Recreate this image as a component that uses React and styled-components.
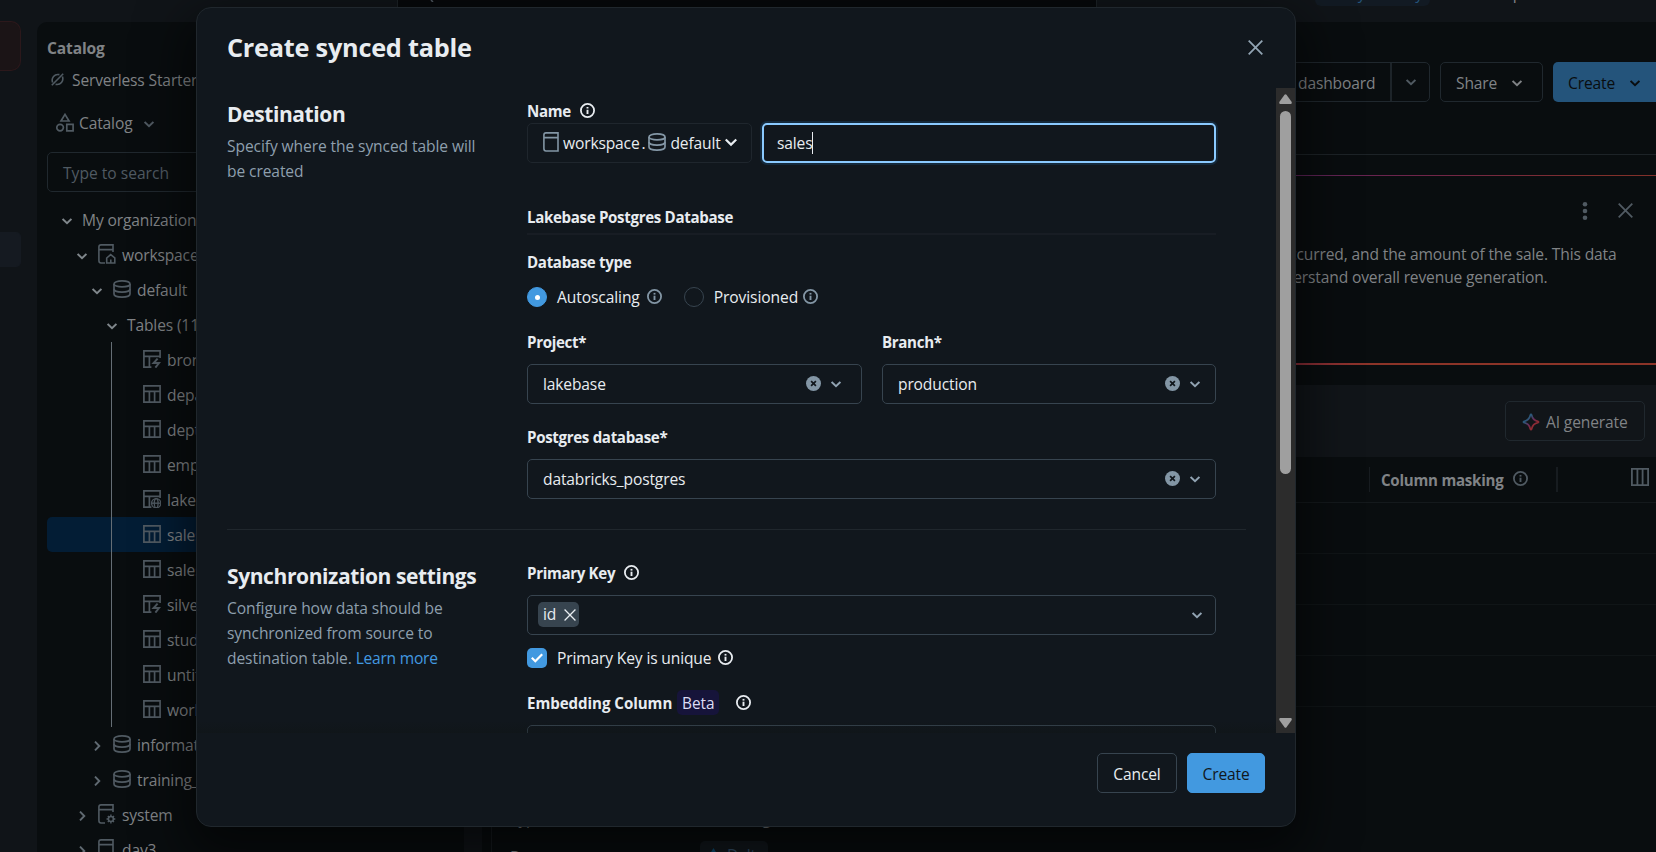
import React from 'react';
import styled, { createGlobalStyle } from 'styled-components';

const GlobalStyle = createGlobalStyle`
  * {
    box-sizing: border-box;
  }

  body {
    margin: 0;
    overflow: hidden;
    background: #101418;
    font-family: "Open Sans", "Noto Sans", sans-serif;
    font-size: 15.6px;
    letter-spacing: -0.15px;
    line-height: 25px;
  }

  svg {
    display: block;
    flex: none;
  }
`;

/* ---------- icons ---------- */

const Chevron = ({ size = 10, rotate, color = 'currentColor', w = 1.9 }) => (
  <svg width={size} height={size} viewBox="0 0 10 10" fill="none" stroke={color} strokeWidth={w}>
    <path d={rotate ? 'M3 0.6 L7.3 5 L3 9.4' : 'M0.6 2.9 L5 7.2 L9.4 2.9'} />
  </svg>
);

const CloseIcon = ({ size = 15, w = 1.8 }) => (
  <svg width={size} height={size} viewBox="0 0 15 15" fill="none" stroke="currentColor" strokeWidth={w}>
    <path d="M0.7 0.7 L14.3 14.3 M14.3 0.7 L0.7 14.3" />
  </svg>
);

const InfoIcon = () => (
  <svg width="15" height="15" viewBox="0 0 15 15" fill="none" stroke="currentColor">
    <circle cx="7.5" cy="7.5" r="6.6" strokeWidth="1.8" />
    <path d="M7.5 6.7 V11" strokeWidth="1.9" />
    <path d="M7.5 3.9 V5.6" strokeWidth="1.9" />
  </svg>
);

const ClearIcon = () => (
  <svg width="15" height="15" viewBox="0 0 15 15">
    <circle cx="7.5" cy="7.5" r="7.5" fill="#8396a5" />
    <path d="M5.1 5.1 L9.9 9.9 M9.9 5.1 L5.1 9.9" stroke="#11171c" strokeWidth="1.7" />
  </svg>
);

const SchemaIcon = () => (
  <svg width="18" height="18" viewBox="0 0 18 18" fill="none" stroke="currentColor" strokeWidth="1.7">
    <ellipse cx="9" cy="3.9" rx="8" ry="3" />
    <path d="M1 4 V14 C1 15.8 4.6 17.1 9 17.1 S17 15.8 17 14 V4" />
    <path d="M1 9 C1 10.8 4.6 12.1 9 12.1 S17 10.8 17 9" />
  </svg>
);

const CatalogIcon = ({ badge }) => (
  <svg width="18" height="20" viewBox="0 0 18 20" fill="none" stroke="currentColor" strokeWidth="1.6">
    {badge ? (
      <path d="M7 19 H3 Q0.9 19 0.9 16.6 V3 Q0.9 0.9 3 0.9 H15 V8 M0.9 5.6 H15" />
    ) : (
      <path d="M0.9 3 Q0.9 0.9 3 0.9 H15 V19 H3 Q0.9 19 0.9 16.6 Z M0.9 5.6 H15" />
    )}
    {badge === 'home' && <path d="M8.7 19 V14 L12.7 10.6 L16.8 14 V19 Z M12.8 19 V15.6" />}
    {badge === 'gear' && (
      <g>
        <circle cx="12.9" cy="15" r="2.5" />
        <path
          d="M12.9 10.6 V12.3 M12.9 17.7 V19.4 M8.5 15 H10.2 M15.6 15 H17.3 M9.8 11.9 L11 13.1 M14.8 16.9 L16 18.1 M16 11.9 L14.8 13.1 M9.8 18.1 L11 16.9"
          strokeWidth="1.4"
        />
      </g>
    )}
  </svg>
);

const TableIcon = ({ badge }) => (
  <svg width="18" height="18" viewBox="0 0 18 18" fill="none" stroke="currentColor" strokeWidth="1.7">
    {!badge && <path d="M0.9 0.9 H17.1 V17.1 H0.9 Z M0.9 6.3 H17.1 M6.4 6.3 V17 M11.6 6.3 V17" />}
    {badge && <path d="M8.4 17.1 H0.9 V0.9 H17.1 V8 M0.9 6.3 H17.1 M6.4 6.3 V17" />}
    {badge === 'bolt' && <path d="M14.6 8.6 L10.6 13 H16 L12.4 17.6" strokeWidth="2" />}
    {badge === 'globe' && (
      <g strokeWidth="1.4">
        <circle cx="13.2" cy="13.2" r="4.6" />
        <path d="M8.6 13.2 H17.8" />
        <ellipse cx="13.2" cy="13.2" rx="1.9" ry="4.6" />
      </g>
    )}
  </svg>
);

const ServerlessIcon = () => (
  <svg width="13" height="13" viewBox="0 0 13 13" fill="none" stroke="currentColor" strokeWidth="1.6">
    <path d="M1.6 9.4 C0 5 3.4 0.6 8.4 1.6 M0.8 12.2 L12.2 0.8 M11.4 3.6 C13 8 9.6 12.4 4.6 11.4" />
  </svg>
);

const ShapesIcon = () => (
  <svg width="18" height="19" viewBox="0 0 18 19" fill="none" stroke="currentColor" strokeWidth="1.7">
    <path d="M9 1.4 L13 8 H5 Z" />
    <circle cx="4.1" cy="14.6" r="3.3" />
    <path d="M10.8 11.4 H17.1 V17.9 H10.8 Z" />
  </svg>
);

const ColumnsIcon = () => (
  <svg width="18" height="18" viewBox="0 0 18 18" fill="none" stroke="currentColor" strokeWidth="1.8">
    <path d="M0.9 0.9 H17.1 V17.1 H0.9 Z M6.4 1 V17 M11.6 1 V17" />
  </svg>
);

const SparkleIcon = () => (
  <svg width="18" height="18" viewBox="0 0 18 18" fill="none">
    <defs>
      <linearGradient id="spark" x1="2" y1="2" x2="15" y2="15" gradientUnits="userSpaceOnUse">
        <stop offset="0.3" stopColor="#2c5779" />
        <stop offset="0.55" stopColor="#6b2a58" />
        <stop offset="0.75" stopColor="#8c2b34" />
      </linearGradient>
    </defs>
    <path
      d="M9 1.4 Q9.5 1.4 9.7 2.2 C10.5 5.8 12.2 7.5 15.8 8.3 Q17.4 9 15.8 9.7 C12.2 10.5 10.5 12.2 9.7 15.8 Q9 17.4 8.3 15.8 C7.5 12.2 5.8 10.5 2.2 9.7 Q0.6 9 2.2 8.3 C5.8 7.5 7.5 5.8 8.3 2.2 Q8.5 1.4 9 1.4 Z"
      stroke="url(#spark)"
      strokeWidth="1.7"
    />
  </svg>
);

/* ---------- page behind the dialog ---------- */

const Page = styled.div`
  position: relative;
  display: grid;
  grid-template-columns: 37px 427px 18px 1fr;
  grid-template-rows: 22px 1fr;
  width: 1656px;
  height: 852px;
  overflow: hidden;
  color: #808386;
`;

const TopBar = styled.div`
  grid-column: 1 / -1;
  display: flex;
  align-items: flex-start;
  height: 22px;
  padding-left: 397px;
  overflow: hidden;
`;

const GlobalSearch = styled.div`
  width: 700px;
  height: 22px;
  margin-right: 218px;
  padding-left: 27px;
  background: #07090b;
  border: 1px solid #1c2226;
  border-width: 0 1px;
  color: #505a62;
`;

const TopPill = styled.div`
  display: flex;
  align-items: flex-end;
  width: 115px;
  height: 6px;
  margin-right: 40px;
  padding: 0 0 6px 10px;
  background: #121a23;
  border-radius: 0 0 10px 10px;
  color: #24547b;
  line-height: 13px;
`;

const TopWorkspace = styled.div`
  display: flex;
  align-items: flex-end;
  height: 6px;
  padding-bottom: 6px;
  line-height: 13px;
`;

const Rail = styled.div`
  display: flex;
  flex-direction: column;
  align-items: flex-start;
  gap: 161px;
  margin-top: -1px;
`;

const RailItem = styled.div`
  width: 21px;
  height: ${p => (p.$alert ? '50px' : '35px')};
  background: ${p => (p.$alert ? '#1b1416' : '#151a21')};
  border: 1px solid ${p => (p.$alert ? '#2c181b' : '#151a21')};
  border-left: 0;
  border-radius: 0 ${p => (p.$alert ? '10px 10px' : '5px 5px')} 0;
`;

const CatalogPanel = styled.div`
  padding: 14px 10px 0;
  overflow: hidden;
  background: #090d0f;
  border-radius: 10px 10px 0 0;
  white-space: nowrap;
`;

const PanelTitle = styled.div`
  height: 25px;
  font-weight: 700;
`;

const PanelLine = styled.div`
  display: flex;
  align-items: center;
  gap: ${p => p.$gap};
  height: 25px;
  margin-top: ${p => p.$top};
  padding-left: ${p => p.$left};

  > svg {
    color: #505a62;
  }

  > svg:nth-child(2) {
    margin-left: 7px;
  }

  > svg:first-child {
    margin-top: -3px;
  }
`;

const SearchField = styled.div`
  height: 40px;
  margin-top: 16px;
  padding-left: 15px;
  border: 1px solid #20282e;
  border-radius: 5px;
  color: #505a62;
  letter-spacing: 0;
  line-height: 40px;
`;

const Tree = styled.div`
  margin-top: 10px;
`;

const TreeRow = styled.div`
  display: flex;
  align-items: center;
  height: 35px;
  padding: 2px 0 0 ${p => 15 + p.$depth * 15}px;
`;

const TreeIcon = styled.span`
  margin: -4px 6px 0 1px;
  color: #505a62;
`;

const TreeChevron = styled.span`
  width: 20px;
  color: ${p => (p.$closed ? '#606a72' : '#80878c')};
`;

/* rows under "Tables" hang off a guide line */
const TableList = styled.div`
  position: relative;

  &::before {
    content: "";
    position: absolute;
    top: 0;
    bottom: 0;
    left: 64px;
    width: 1px;
    background: #656e75;
  }
`;

const TableRow = styled.div`
  display: flex;
  align-items: center;
  gap: 6px;
  height: 35px;
  padding: 2px 0 0 96px;
  border-radius: 5px;
  background: ${p => (p.$selected ? '#031d35' : 'transparent')};

  svg {
    margin-top: -4px;
    color: #505a62;
  }
`;

const Gutter = styled.div`
  background: #101418;
`;

const Main = styled.div`
  display: flex;
  flex-direction: column;
  min-width: 0;
  background: #090d0f;
  white-space: nowrap;
`;

const Actions = styled.div`
  display: flex;
  gap: 10px;
  height: 133px;
  padding: 40px 0 0 718px;
  border-bottom: 1px solid #1d2327;

  > * {
    flex: none;
  }
`;

const GhostButton = styled.div`
  display: flex;
  align-items: center;
  gap: ${p => p.$gap || '8px'};
  width: ${p => p.$width};
  height: 40px;
  padding: 2px 0 0 ${p => p.$left || '15px'};
  border: 1px solid #20282e;
  border-radius: 5px;

  > svg {
    margin-top: -1px;
  }
`;

const SplitArrow = styled.span`
  display: flex;
  align-items: center;
  justify-content: center;
  width: 39px;
  height: 38px;
  margin: -2px 0 0 auto;
  border-left: 2px solid #1d2429;
  color: #505a62;
`;

const CreateMenu = styled.div`
  display: flex;
  align-items: center;
  gap: 15px;
  width: 110px;
  height: 40px;
  padding: 2px 0 0 15px;
  background: #24547b;
  border-radius: 5px;
  color: #090d0f;
`;

const Suggestion = styled.div`
  height: 190px;
  margin-top: 20px;
  padding-top: 1px;
  background:
    linear-gradient(90deg, #5b2358 69%, #70254a 80%, #81302a 96%) top / 100% 1px no-repeat,
    linear-gradient(90deg, #8a2c38 69%, #8c3428 76%) bottom / 100% 2px no-repeat;
`;

const SuggestionTools = styled.div`
  display: flex;
  align-items: center;
  justify-content: flex-end;
  gap: 30px;
  height: 67px;
  padding: 2px 23px 0 0;
  color: #505a62;
`;

const SuggestionText = styled.p`
  margin: 0;
  padding-left: 798px;
  line-height: 23px;

  span {
    display: block;
    margin-left: -15px;
  }
`;

const TableToolbar = styled.div`
  display: flex;
  align-items: center;
  justify-content: flex-end;
  height: 72px;
  margin-top: 20px;
  padding-right: 11px;
  background: #111519;
`;

const TableHead = styled.div`
  display: flex;
  align-items: center;
  height: 46px;
  padding-left: 887px;
  border-bottom: 1px solid #14191c;
  color: #505a62;

  > svg {
    margin-top: -5px;
  }
`;

const HeadCell = styled.div`
  display: flex;
  align-items: center;
  gap: 9px;
  width: 189px;
  height: 25px;
  padding: 2px 0 0 11px;
  border: solid #171c20;
  border-width: 0 2px 0 1px;
  margin-right: 73px;

  b {
    color: #808386;
    font-size: 15.1px;
    letter-spacing: -0.25px;
  }

  svg {
    margin-top: -4px;
  }
`;

const EmptyRow = styled.div`
  flex: none;
  height: 51px;
  border-bottom: 1px solid #101517;
`;

const Details = styled.div`
  display: grid;
  grid-template-columns: 190px auto;
  justify-content: start;
  row-gap: 10px;
  width: 400px;
  margin: 99px 0 0 9px;
  padding-left: 18px;
  border-left: 1px solid #171c20;
`;

const DetailName = styled.div`
  padding-top: ${p => p.$top || 0};
`;

const DetailValue = styled.div`
  display: flex;
  align-items: center;
  gap: 8px;
  width: 68px;
  height: ${p => (p.$pill ? '29px' : '25px')};
  padding: ${p => (p.$pill ? '0 0 0 8px' : '0 0 0 22px')};
  background: ${p => (p.$pill ? '#12181d' : 'transparent')};
  border-radius: 5px;
  color: ${p => (p.$pill ? '#34506a' : '#808386')};
`;

/* ---------- dialog ---------- */

const Overlay = styled.div`
  position: absolute;
  inset: 0;
  padding: 7px 0 0 196px;
`;

const Dialog = styled.div`
  display: flex;
  flex-direction: column;
  width: 1100px;
  height: 820px;
  background: #11171d;
  border: 1px solid #20272d;
  border-radius: 15px;
  box-shadow: 0 20px 50px 10px rgba(0, 0, 0, 0.55);
  color: #e8ecf0;
  overflow: hidden;
  white-space: nowrap;
`;

const DialogHeader = styled.div`
  display: flex;
  align-items: center;
  justify-content: space-between;
  height: 80px;
  padding: 0 32px 2px 30px;
  color: #92a4b3;

  h1 {
    margin: 0;
    color: #e8ecf0;
    font-size: 25.3px;
    font-weight: 700;
    letter-spacing: -0.25px;
  }
`;

const DialogBody = styled.div`
  display: flex;
  height: 645px;
`;

const Sections = styled.div`
  position: relative;
  flex: 1;
  padding: 10px 30px 0;
  overflow: hidden;

  /* fade over the last pixels above the footer */
  &::after {
    content: "";
    position: absolute;
    right: 0;
    bottom: 0;
    left: 0;
    height: 12px;
    background: linear-gradient(transparent, rgba(15, 20, 20, 0.4));
  }
`;

const Section = styled.section`
  display: grid;
  grid-template-columns: 300px 689px;
  height: ${p => p.$height};
  border-bottom: 1px solid #20272d;
`;

const Intro = styled.div`
  color: #8e9fad;
  letter-spacing: -0.1px;

  h2 {
    margin: 0 0 5px;
    padding-top: ${p => p.$top};
    color: #e8ecf0;
    font-size: 21px;
    font-weight: 700;
    letter-spacing: -0.4px;
    line-height: 30px;
  }

  a {
    color: #4299e0;
    letter-spacing: -0.25px;
  }
`;

const Label = styled.div`
  display: flex;
  align-items: center;
  gap: 9px;
  height: 25px;
  margin-top: ${p => p.$top || 0};
  font-size: 15.1px;
  font-weight: 700;
  letter-spacing: ${p => (p.$wide ? '-0.05px' : '-0.33px')};

  svg {
    margin-top: -3px;
  }
`;

const NameRow = styled.div`
  display: grid;
  grid-template-columns: 225px 454px;
  gap: 10px;
  margin-top: -1px;
`;

const SchemaPicker = styled.div`
  display: flex;
  align-items: center;
  gap: 2px;
  height: 40px;
  padding-left: 15px;
  border: 1px solid #1f262d;
  border-radius: 5px;
  word-spacing: -2px;

  svg {
    color: #8396a5;
    margin-top: -2px;
  }

  svg:nth-child(2) {
    margin: -3px 2px 0 1px;
  }

  svg:last-child {
    margin-left: 2px;
    color: #e8ecf0;
  }
`;

const NameInput = styled.div`
  display: flex;
  align-items: center;
  height: 40px;
  padding-left: 13px;
  border: 2px solid #8acaff;
  border-radius: 5px;
  box-shadow: 0 0 0 2px #14293b;

  &::after {
    content: "";
    width: 1px;
    height: 22px;
    background: #e8ecf0;
  }
`;

const GroupTitle = styled(Label)`
  height: 30px;
  padding-bottom: 4px;
  border-bottom: 2px solid #181d24;
`;

const RadioGroup = styled.div`
  display: flex;
  align-items: center;
  height: 25px;
  margin-top: 10px;
  letter-spacing: -0.1px;

  svg {
    margin: -2px 22px 0 7px;
    color: #8396a5;
  }

  svg:last-child {
    margin-left: 5px;
  }
`;

const Radio = styled.span`
  display: flex;
  align-items: center;
  justify-content: center;
  width: 20px;
  height: 20px;
  margin: -1px 10px 0 0;
  background: ${p => (p.$on ? '#4299e0' : 'transparent')};
  border: 1px solid ${p => (p.$on ? '#4299e0' : '#37444f')};
  border-radius: 50%;

  &::after {
    content: "";
    width: 5px;
    height: 5px;
    background: ${p => (p.$on ? '#fff' : 'transparent')};
    border-radius: 50%;
  }
`;

const FieldPair = styled.div`
  display: grid;
  grid-template-columns: 335px 334px;
  gap: 20px;
`;

const Select = styled.div`
  display: flex;
  align-items: center;
  height: 40px;
  margin-top: 9px;
  padding: 0 ${p => p.$right || '15px'} 0 ${p => (p.$tags ? '10px' : '15px')};
  border: 1px solid #37444f;
  border-radius: 5px;

  > svg {
    color: #92a4b3;
    margin-top: -1px;
  }

  > svg:first-of-type {
    margin-left: auto;
  }

  > svg:nth-of-type(2) {
    margin: 0 0 0 10px;
  }
`;

const Tag = styled.span`
  display: flex;
  align-items: center;
  gap: 8px;
  width: 41px;
  height: 25px;
  margin-top: -1px;
  padding-left: 5px;
  background: #37444f;
  border-radius: 5px;
`;

const CheckRow = styled.div`
  display: flex;
  align-items: center;
  height: 25px;
  margin-top: 11px;

  > svg {
    margin: -2px 0 0 7px;
  }
`;

const Checkbox = styled.span`
  display: flex;
  align-items: center;
  justify-content: center;
  width: 20px;
  height: 20px;
  margin: -2px 10px 0 0;
  background: #4299e0;
  border-radius: 5px;
`;

const Beta = styled.span`
  width: 42px;
  height: 25px;
  margin: -2px 8px 0 -4px;
  background: #16143a;
  border-radius: 5px;
  color: #dcdcf4;
  font-weight: 400;
  font-size: 15.4px;
  line-height: 27px;
  text-align: center;
`;

const Scrollbar = styled.div`
  display: flex;
  flex-direction: column;
  align-items: center;
  width: 19px;
  padding: 6px 0 5px;
  background: #2c2c2c;

  svg:last-child {
    margin-top: auto;
  }
`;

const Thumb = styled.div`
  width: 11px;
  height: 363px;
  margin-top: 7px;
  background: #9f9f9f;
  border-radius: 6px;
`;

const Footer = styled.div`
  display: flex;
  justify-content: flex-end;
  gap: 10px;
  padding: 20px 30px 0;
`;

const Button = styled.button`
  width: ${p => (p.$primary ? '78px' : '80px')};
  height: 40px;
  padding: 2px 0 0;
  background: ${p => (p.$primary ? '#4299e0' : 'transparent')};
  border: 1px solid ${p => (p.$primary ? '#4299e0' : '#37444f')};
  border-radius: 5px;
  color: ${p => (p.$primary ? '#11171c' : '#e8ecf0')};
  font: inherit;
  letter-spacing: inherit;
`;

const tables = [
  { name: 'bronze_sales', badge: 'bolt' },
  { name: 'department' },
  { name: 'dept' },
  { name: 'employee' },
  { name: 'lakebase_sales', badge: 'globe' },
  { name: 'sales', selected: true },
  { name: 'sales_data' },
  { name: 'silver_sales', badge: 'bolt' },
  { name: 'students' },
  { name: 'untitled' },
  { name: 'workers' },
];

const Branch = ({ depth, closed, icon, children }) => (
  <TreeRow $depth={depth}>
    <TreeChevron $closed={closed}>
      <Chevron rotate={closed} />
    </TreeChevron>
    {icon && <TreeIcon>{icon}</TreeIcon>}
    {children}
  </TreeRow>
);

const Catalog = () => (
  <CatalogPanel>
    <PanelTitle>Catalog</PanelTitle>
    <PanelLine $gap="8px" $top="7px" $left="4px">
      <ServerlessIcon /> Serverless Starter
    </PanelLine>
    <PanelLine $gap="5px" $top="18px" $left="9px">
      <ShapesIcon /> Catalog <Chevron />
    </PanelLine>
    <SearchField>Type to search</SearchField>
    <Tree>
      <Branch depth={0}>My organization</Branch>
      <Branch depth={1} icon={<CatalogIcon badge="home" />}>workspace</Branch>
      <Branch depth={2} icon={<SchemaIcon />}>default</Branch>
      <Branch depth={3}>Tables (11)</Branch>
      <TableList>
        {tables.map(t => (
          <TableRow key={t.name} $selected={t.selected}>
            <TableIcon badge={t.badge} />
            {t.name}
          </TableRow>
        ))}
      </TableList>
      <Branch depth={2} closed icon={<SchemaIcon />}>information_schema</Branch>
      <Branch depth={2} closed icon={<SchemaIcon />}>training_data</Branch>
      <Branch depth={1} closed icon={<CatalogIcon badge="gear" />}>system</Branch>
      <Branch depth={1} closed icon={<CatalogIcon />}>day3</Branch>
    </Tree>
  </CatalogPanel>
);

const TableDetails = () => (
  <Main>
    <Actions>
      <GhostButton $width="230px" $left="97px">
        dashboard
        <SplitArrow><Chevron /></SplitArrow>
      </GhostButton>
      <GhostButton $width="103px" $gap="15px">
        Share <Chevron />
      </GhostButton>
      <CreateMenu>
        Create <Chevron />
      </CreateMenu>
    </Actions>
    <Suggestion>
      <SuggestionTools>
        <svg width="6" height="20" viewBox="0 0 6 20" fill="currentColor">
          <circle cx="3" cy="3.2" r="2.3" />
          <circle cx="3" cy="10" r="2.3" />
          <circle cx="3" cy="16.8" r="2.3" />
        </svg>
        <CloseIcon />
      </SuggestionTools>
      <SuggestionText>
        occurred, and the amount of the sale. This data
        <span>understand overall revenue generation.</span>
      </SuggestionText>
    </Suggestion>
    <TableToolbar>
      <GhostButton $width="140px" $gap="6px" $left="16px">
        <SparkleIcon /> AI generate
      </GhostButton>
    </TableToolbar>
    <TableHead>
      <HeadCell><b>Column masking</b> <InfoIcon /></HeadCell>
      <ColumnsIcon />
    </TableHead>
    <EmptyRow />
    <EmptyRow />
    <EmptyRow />
    <EmptyRow />
    <Details>
      <DetailName>Type</DetailName>
      <DetailValue>Managed</DetailValue>
      <DetailName $top="4px">Data source</DetailName>
      <DetailValue $pill>
        <svg width="11" height="16" viewBox="0 0 11 16" fill="#0b4a6e">
          <path d="M5.5 0 L11 9 L5.5 16 L0 9 Z" />
        </svg>
        Delta
      </DetailValue>
    </Details>
  </Main>
);

const SyncedTableDialog = () => (
  <Dialog>
    <DialogHeader>
      <h1>Create synced table</h1>
      <CloseIcon />
    </DialogHeader>
    <DialogBody>
      <Sections>
        <Section $height="432px">
          <Intro $top="1px">
            <h2>Destination</h2>
            Specify where the synced table will<br />be created
          </Intro>
          <div>
            <Label $top="1px">Name <InfoIcon /></Label>
            <NameRow>
              <SchemaPicker>
                <CatalogIcon />
                workspace . <SchemaIcon /> default <Chevron size={12} w={1.8} />
              </SchemaPicker>
              <NameInput>sales</NameInput>
            </NameRow>
            <GroupTitle $top="42px">Lakebase Postgres Database</GroupTitle>
            <Label $top="15px">Database type</Label>
            <RadioGroup>
              <Radio $on /> Autoscaling <InfoIcon />
              <Radio /> Provisioned <InfoIcon />
            </RadioGroup>
            <FieldPair>
              <div>
                <Label $top="20px">Project*</Label>
                <Select $right="20px">lakebase <ClearIcon /> <Chevron /></Select>
              </div>
              <div>
                <Label $top="20px">Branch*</Label>
                <Select>production <ClearIcon /> <Chevron /></Select>
              </div>
            </FieldPair>
            <Label $top="21px">Postgres database*</Label>
            <Select>databricks_postgres <ClearIcon /> <Chevron /></Select>
          </div>
        </Section>
        <Section $height="400px">
          <Intro $top="31px">
            <h2>Synchronization settings</h2>
            Configure how data should be<br />
            synchronized from source to<br />
            destination table. <a>Learn more</a>
          </Intro>
          <div>
            <Label $top="31px">Primary Key <InfoIcon /></Label>
            <Select $tags $right="13px">
              <Tag>id <CloseIcon size={12} w={1.6} /></Tag>
              <Chevron />
            </Select>
            <CheckRow>
              <Checkbox>
                <svg width="12" height="10" viewBox="0 0 12 10" fill="none" stroke="#fff" strokeWidth="2.2">
                  <path d="M0.8 4.8 L4.3 8.2 L11.2 1.2" />
                </svg>
              </Checkbox>
              Primary Key is unique <InfoIcon />
            </CheckRow>
            <Label $top="20px" $wide>Embedding Column <Beta>Beta</Beta> <InfoIcon /></Label>
            <Select>&nbsp;</Select>
          </div>
        </Section>
      </Sections>
      <Scrollbar>
        <svg width="13" height="10" viewBox="0 0 13 10" fill="#9f9f9f">
          <path d="M5.5 0.8 Q6.5 -0.3 7.5 0.8 L12.7 8 Q13 10 11.8 10 H1.2 Q0 10 0.3 8 Z" />
        </svg>
        <Thumb />
        <svg width="13" height="10" viewBox="0 0 13 10" fill="#9f9f9f">
          <path d="M5.5 9.2 Q6.5 10.3 7.5 9.2 L12.7 2 Q13 0 11.8 0 H1.2 Q0 0 0.3 2 Z" />
        </svg>
      </Scrollbar>
    </DialogBody>
    <Footer>
      <Button>Cancel</Button>
      <Button $primary>Create</Button>
    </Footer>
  </Dialog>
);

const App = () => (
  <Page>
    <GlobalStyle />
    <TopBar>
      <GlobalSearch>
        <svg width="10" height="2" viewBox="0 0 10 2" stroke="currentColor" strokeWidth="1.5">
          <path d="M6 0 L8 2" />
        </svg>
      </GlobalSearch>
      <TopPill>Verify identity</TopPill>
      <TopWorkspace>workspace</TopWorkspace>
    </TopBar>
    <Rail>
      <RailItem $alert />
      <RailItem />
    </Rail>
    <Catalog />
    <Gutter />
    <TableDetails />
    <Overlay>
      <SyncedTableDialog />
    </Overlay>
  </Page>
);

export default App;
